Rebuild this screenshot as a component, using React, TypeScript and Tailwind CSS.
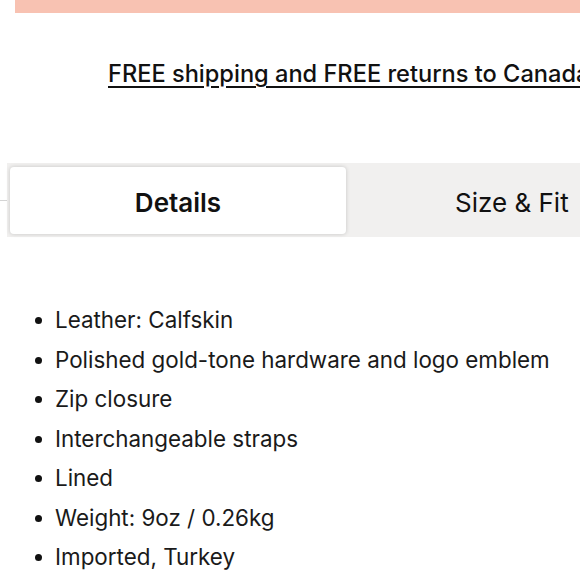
import React from "react";

const details = [
  "Leather: Calfskin",
  "Polished gold-tone hardware and logo emblem",
  "Zip closure",
  "Interchangeable straps",
  "Lined",
  "Weight: 9oz / 0.26kg",
  "Imported, Turkey",
];

const App = () => {
  return (
    <div className="w-[580px] h-[580px] overflow-hidden bg-white text-[#111] font-['Inter',sans-serif]">
      {/* Promo banner edge */}
      <div className="ml-[15px] h-[13px] bg-[#f8c2b2]" />

      {/* Shipping note */}
      <div className="mt-[47px] pl-[108px] whitespace-nowrap">
        <span className="text-[23.6px] leading-[28px] font-medium underline decoration-2 underline-offset-[4px]">
          FREE shipping and FREE returns to Canada
        </span>
      </div>

      {/* Tabs */}
      <div className="mt-[75px] flex items-center">
        <div className="w-[7px] h-px bg-[#d4d4d4]" />
        <div className="flex-1 flex h-[74px] bg-[#f1f0ef] pl-[3px] py-[4px]">
          <button className="w-[336px] h-[67px] pt-[3px] bg-white rounded-[4px] shadow-[0_0_4px_rgba(0,0,0,0.18)] text-[26px] font-semibold">
            Details
          </button>
          <button className="flex-1 h-[67px] pt-[3px] text-[26px] text-left pl-[109px] whitespace-nowrap">
            Size &amp; Fit
          </button>
        </div>
      </div>

      {/* Details list */}
      <ul className="mt-[63px] pl-[55px] text-[22.4px] leading-[39.5px] text-[#1a1a1a]">
        {details.map((item) => (
          <li key={item} className="relative whitespace-nowrap">
            <span className="absolute left-[-20px] top-[17px] w-[7px] h-[7px] rounded-full bg-[#111]" />
            {item}
          </li>
        ))}
      </ul>
    </div>
  );
};

export default App;
